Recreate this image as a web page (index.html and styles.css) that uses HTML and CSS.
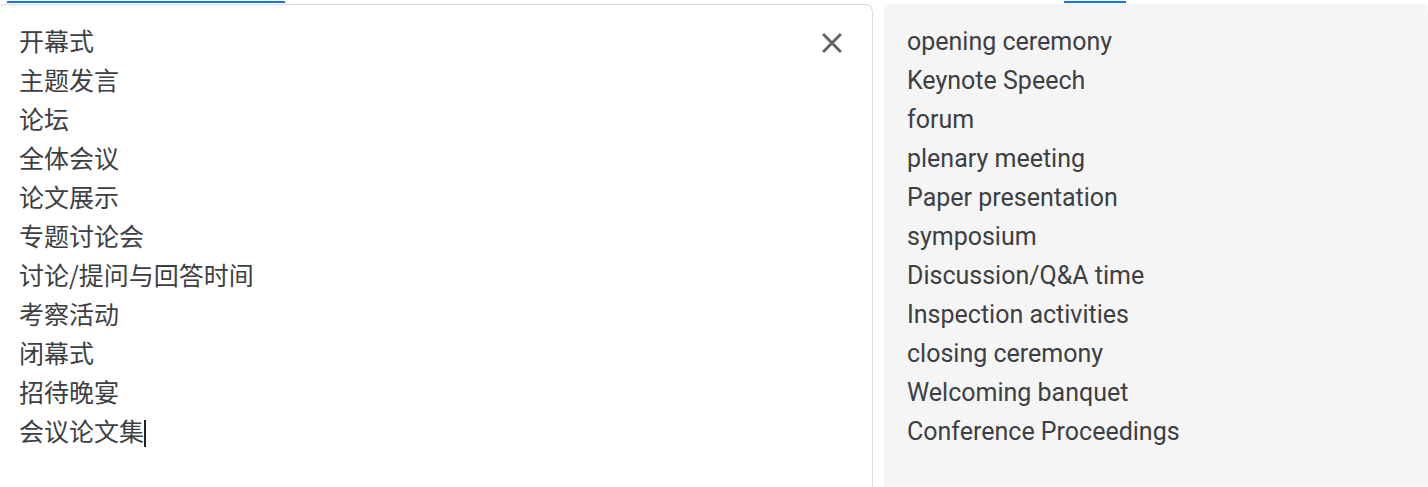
FILE: index.html
```html
<!DOCTYPE html>
<html lang="zh">
<head>
<meta charset="utf-8">
<title>Translate</title>
<link rel="stylesheet" href="styles.css">
</head>
<body>
<div class="tabs">
  <div class="ind ind-src"></div>
  <div class="ind ind-tgt"></div>
</div>
<div class="panels">
  <div class="panel src">
    <div class="lines zh">
      <div>开幕式</div>
      <div>主题发言</div>
      <div>论坛</div>
      <div>全体会议</div>
      <div>论文展示</div>
      <div>专题讨论会</div>
      <div>讨论/提问与回答时间</div>
      <div>考察活动</div>
      <div>闭幕式</div>
      <div>招待晚宴</div>
      <div>会议论文集<span class="caret"></span></div>
    </div>
    <button class="clear" aria-label="clear">
      <svg viewBox="0 0 24 24" width="34" height="34"><path d="M19 6.41L17.59 5 12 10.59 6.41 5 5 6.41 10.59 12 5 17.59 6.41 19 12 13.41 17.59 19 19 17.59 13.41 12z" fill="#5f6368"/></svg>
    </button>
  </div>
  <div class="panel tgt">
    <div class="lines en">
      <div>opening ceremony</div>
      <div>Keynote Speech</div>
      <div>forum</div>
      <div>plenary meeting</div>
      <div>Paper presentation</div>
      <div>symposium</div>
      <div>Discussion/Q&amp;A time</div>
      <div>Inspection activities</div>
      <div>closing ceremony</div>
      <div>Welcoming banquet</div>
      <div>Conference Proceedings</div>
    </div>
  </div>
</div>
</body>
</html>
```

FILE: styles.css
```css
html, body {
  margin: 0;
  padding: 0;
  background: #fff;
  overflow: hidden;
  height: 487px;
}
body {
  font-family: Roboto, "Noto Sans CJK SC", sans-serif;
  color: #3c4043;
}
.tabs {
  display: flex;
  height: 4px;
  align-items: flex-start;
  padding-top: 1px;
  box-sizing: border-box;
}
.ind {
  height: 2px;
  background: #1a73e8;
}
.ind-src {
  margin-left: 7px;
  width: 278px;
}
.ind-tgt {
  margin-left: 779px;
  width: 62px;
}
.panels {
  display: flex;
  gap: 11px;
  margin-left: -3px;
  height: 487px;
}
.panel {
  border-radius: 8px 8px 0 0;
  box-sizing: border-box;
}
.src {
  width: 876px;
  border: 1px solid #dadce0;
  border-bottom: none;
  display: flex;
  justify-content: space-between;
  padding: 16px 23px 0 21px;
}
.tgt {
  flex: 1;
  background: #f5f5f5;
  padding: 18px 0 0 23px;
}
.lines {
  font-size: 25px;
  line-height: 39px;
}
.zh {
  font-family: "Noto Sans CJK SC", sans-serif;
  font-size: 25px;
  color: #3c4043;
}
.en {
  font-family: Roboto, sans-serif;
}
.caret {
  display: inline-block;
  width: 2px;
  height: 27px;
  background: #202124;
  vertical-align: -6px;
}
.clear {
  border: none;
  background: none;
  padding: 0;
  width: 34px;
  height: 34px;
  margin-top: 5px;
  cursor: pointer;
}
.clear svg {
  display: block;
}
```
